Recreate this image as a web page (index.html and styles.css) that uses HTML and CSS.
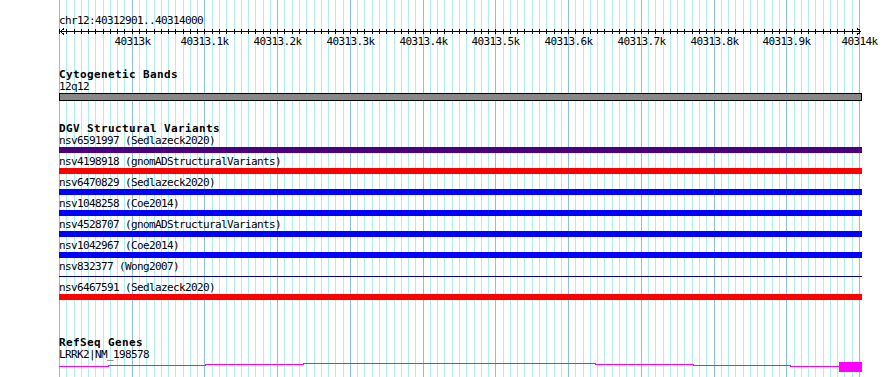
FILE: index.html
```html
<!DOCTYPE html>
<html lang="en">
<head>
    <meta charset="UTF-8">
    <title>chr12:40312901..40314000</title>
    <link rel="stylesheet" href="styles.css">
</head>
<body>
    <div class="browser">
        <svg class="grid" id="grid" width="890" height="377"></svg>

        <div class="tracks">
            <!-- Ruler -->
            <section class="track ruler">
                <div class="feat-name">chr12:40312901..40314000</div>
                <svg class="scale" id="scale" width="803" height="20"></svg>
            </section>

            <!-- Cytogenetic Bands -->
            <section class="track cyto">
                <h2 class="track-title">Cytogenetic Bands</h2>
                <div class="feat-name">12q12</div>
                <div class="band"></div>
            </section>

            <!-- DGV Structural Variants -->
            <section class="track dgv">
                <h2 class="track-title">DGV Structural Variants</h2>
                <div class="sv">
                    <div class="feat-name">nsv6591997 (Sedlazeck2020)</div>
                    <div class="bar indigo"></div>
                </div>
                <div class="sv">
                    <div class="feat-name">nsv4198918 (gnomADStructuralVariants)</div>
                    <div class="bar red"></div>
                </div>
                <div class="sv">
                    <div class="feat-name">nsv6470829 (Sedlazeck2020)</div>
                    <div class="bar blue"></div>
                </div>
                <div class="sv">
                    <div class="feat-name">nsv1048258 (Coe2014)</div>
                    <div class="bar blue"></div>
                </div>
                <div class="sv">
                    <div class="feat-name">nsv4528707 (gnomADStructuralVariants)</div>
                    <div class="bar blue"></div>
                </div>
                <div class="sv">
                    <div class="feat-name">nsv1042967 (Coe2014)</div>
                    <div class="bar blue"></div>
                </div>
                <div class="sv">
                    <div class="feat-name">nsv832377 (Wong2007)</div>
                    <div class="bar thin"></div>
                </div>
                <div class="sv">
                    <div class="feat-name">nsv6467591 (Sedlazeck2020)</div>
                    <div class="bar red"></div>
                </div>
            </section>

            <!-- RefSeq Genes -->
            <section class="track genes">
                <h2 class="track-title">RefSeq Genes</h2>
                <div class="feat-name">LRRK2|NM_198578</div>
                <svg class="gene" width="803" height="11">
                    <path class="intron" d="M0 5.5H49V4.5H146V3.5H244V2.5H536V3.5H634V4.5H731V5.5H780"/>
                    <rect class="exon" x="780" y="1" width="23" height="10"/>
                </svg>
            </section>
        </div>
    </div>

    <script>
        document.addEventListener("DOMContentLoaded", function () {
            const NS = "http://www.w3.org/2000/svg";
            const grid = document.getElementById("grid");
            const scale = document.getElementById("scale");
            const LEFT = 59;
            const STEP = 800 / 110; // 10bp per step

            function xAt(k) {
                return Math.floor(LEFT + 0.5 + k * STEP);
            }

            function add(parent, tag, attrs) {
                const el = document.createElementNS(NS, tag);
                for (const name in attrs) el.setAttribute(name, attrs[name]);
                parent.appendChild(el);
                return el;
            }

            // ruler baseline and arrows
            add(scale, "line", { x1: 1, y1: 4.5, x2: 802, y2: 4.5, "class": "axis" });
            add(scale, "polyline", { points: "5,1.5 1.5,4.5 5,7.5", "class": "axis" });
            add(scale, "polyline", { points: "798,1.5 801.5,4.5 798,7.5", "class": "axis" });

            for (let k = 0; k <= 110; k++) {
                const x = xAt(k) + 0.5;
                const major = k % 10 === 0;

                add(grid, "line", { x1: x, y1: 0, x2: x, y2: 377, "class": major ? "major" : "minor" });

                const local = x - LEFT;
                add(scale, "line", { x1: local, y1: 2, x2: local, y2: 7, "class": "axis" });

                if (major && k > 0) {
                    const kb = 40312900 + k * 10;
                    const label = kb % 1000 === 0 ? (kb / 1000) + "k" : (kb / 1000).toFixed(1) + "k";
                    const t = add(scale, "text", { x: local, y: 18, "class": "tick-label" });
                    t.textContent = label;
                }
            }
        });
    </script>
</body>
</html>
```

FILE: styles.css
```css
body {
    margin: 0;
    background: #fff;
    color: #000;
    font-family: "DejaVu Sans Mono", monospace;
    font-size: 11px;
    line-height: 12px;
    letter-spacing: -0.62px;
}

.browser {
    position: relative;
    width: 890px;
    height: 377px;
    overflow: hidden;
}

.grid {
    position: absolute;
    top: 0;
    left: 0;
}

.grid line {
    stroke-width: 1;
    shape-rendering: crispEdges;
}

.grid .minor {
    stroke: #afeeee;
}

.grid .major {
    stroke: #87bfe6;
}

.tracks {
    position: relative;
    width: 803px;
    padding: 15px 0 0 59px;
}

.track {
    margin: 0;
}

.track-title {
    margin: 0;
    height: 12px;
    font-size: 11px;
    font-weight: bold;
    line-height: 14px;
    letter-spacing: 0.38px;
}

.feat-name {
    height: 12px;
    line-height: 14px;
    white-space: nowrap;
}

.ruler .feat-name {
    line-height: 12px;
}

svg {
    display: block;
    overflow: visible;
}

.scale .axis {
    stroke: #000;
    stroke-width: 1;
    fill: none;
    shape-rendering: crispEdges;
}

.tick-label {
    font-family: "DejaVu Sans Mono", monospace;
    font-size: 11px;
    letter-spacing: -0.62px;
    text-anchor: middle;
    fill: #000;
}

.cyto {
    margin-top: 21px;
}

.band {
    margin-top: 1px;
    height: 6px;
    background: #888;
    border: 1px solid #000;
}

.dgv {
    margin-top: 21px;
}

.sv {
    display: flex;
    flex-direction: column;
    margin-bottom: 2px;
}

.bar {
    height: 6px;
    margin-top: 1px;
}

.bar.indigo {
    background: #4b0082;
}

.bar.red {
    background: #ff0000;
}

.bar.blue {
    background: #0000ff;
}

.bar.thin {
    height: 1px;
    margin: 4px 0 2px;
    background: #00008b;
}

.genes {
    margin-top: 36px;
}

.gene {
    margin-top: 1px;
}

.gene .intron {
    stroke: #ff00ff;
    stroke-width: 1;
    fill: none;
    shape-rendering: crispEdges;
}

.gene .exon {
    fill: #ff00ff;
}
```
